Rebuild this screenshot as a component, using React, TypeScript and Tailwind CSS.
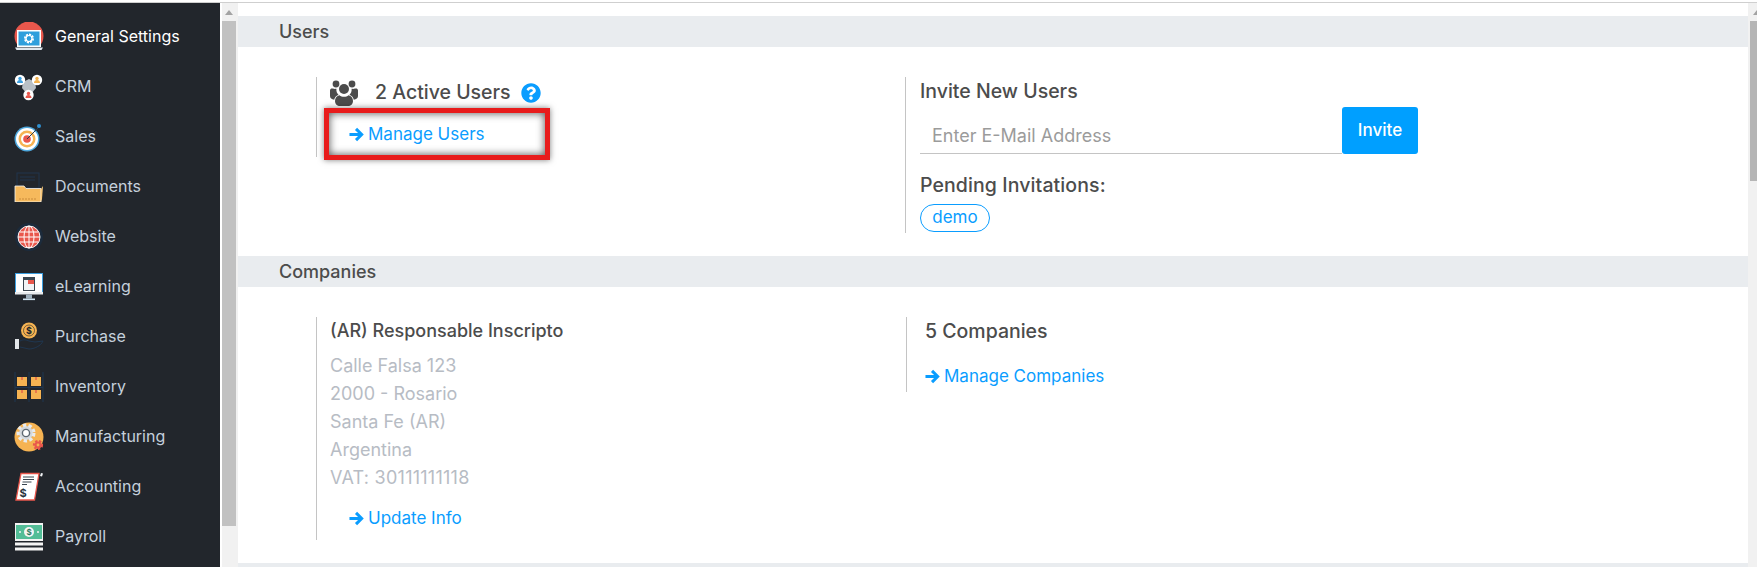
import type { ReactNode } from "react";
import { FaQuestionCircle } from "react-icons/fa";

function IconSettings() {
  return (
    <svg viewBox="0 0 30 30" className="w-[30px] h-[30px]">
      <circle cx="15" cy="14" r="14.5" fill="#e9574c" />
      <rect x="0" y="24" width="30" height="6" fill="#22262c" />
      <rect x="3" y="8" width="24" height="17" fill="#fff" />
      <rect x="4.5" y="9.5" width="21" height="14" fill="#2f9fdc" />
      <circle cx="15" cy="16.5" r="3.8" fill="none" stroke="#fff" strokeWidth="2.4" strokeDasharray="2 0.9" />
      <circle cx="15" cy="16.5" r="3" fill="none" stroke="#fff" strokeWidth="1.2" />
      <path d="M1 25.5h28l-1.5 2.5h-25z" fill="#dfe6ec" />
    </svg>
  );
}

function IconCrm() {
  const bubble = (cx: number, cy: number, c: string) => (
    <g>
      <circle cx={cx} cy={cy} r="5.2" fill="#fff" />
      <circle cx={cx} cy={cy - 1.5} r="1.7" fill={c} />
      <path d={`M${cx - 3} ${cy + 3}a3 3 0 0 1 6 0z`} fill={c} />
    </g>
  );
  return (
    <svg viewBox="0 0 30 30" className="w-[30px] h-[30px]">
      <path d="M9 10l6-3 6 3 1 6-5 6h-4l-5-6z" fill="#b9c0c6" />
      {bubble(6, 8, "#3c9fe0")}
      {bubble(23, 8, "#f2b04c")}
      {bubble(14.5, 23, "#e9574c")}
    </svg>
  );
}

function IconSales() {
  return (
    <svg viewBox="0 0 30 30" className="w-[30px] h-[30px]">
      <circle cx="13" cy="17" r="12.5" fill="#4ea7dc" />
      <circle cx="13" cy="17" r="11" fill="#fff" />
      <circle cx="13" cy="17" r="8.5" fill="#f6b352" />
      <circle cx="13" cy="17" r="6" fill="#fff" />
      <circle cx="13" cy="17" r="3.8" fill="#e9574c" />
      <path d="M13 17L24.5 5.5" stroke="#2c3e50" strokeWidth="1" />
      <circle cx="25" cy="4" r="2" fill="#2f8fd0" />
    </svg>
  );
}

function IconDocuments() {
  return (
    <svg viewBox="0 0 30 30" className="w-[30px] h-[30px]">
      <rect x="3" y="1" width="22" height="15" fill="none" stroke="#20344d" strokeWidth="1" />
      <path d="M6 5h15M6 8h15" stroke="#20344d" strokeWidth="1" />
      <path d="M1 14h9l2 2.5h15V30H1z" fill="#f6b95c" stroke="#f4f4f4" strokeWidth="0.8" />
      <path d="M27 17l2-3-1 13-1 3z" fill="#f7c678" />
      <path d="M5 27h18" stroke="#c98b3a" strokeWidth="1.2" strokeDasharray="2 1" />
    </svg>
  );
}

function IconWebsite() {
  return (
    <svg viewBox="0 0 30 30" className="w-[30px] h-[30px]">
      <circle cx="15" cy="15" r="14" fill="#1c2b3c" />
      <circle cx="15" cy="15" r="11" fill="#e9574c" stroke="#f3f3f3" strokeWidth="1" />
      <ellipse cx="15" cy="15" rx="5" ry="11" fill="none" stroke="#fff" strokeWidth="1" />
      <path d="M15 4v22M4 15h22M5.5 10h19M5.5 20h19" stroke="#fff" strokeWidth="1" />
    </svg>
  );
}

function IconLearning() {
  return (
    <svg viewBox="0 0 30 30" className="w-[30px] h-[30px]">
      <rect x="1" y="1" width="28" height="21" fill="#3c9fe0" />
      <rect x="2" y="2" width="26" height="18" fill="#fff" />
      <rect x="9" y="5" width="12" height="14" fill="#3b4650" />
      <rect x="10" y="8" width="10" height="10" fill="#f1f3f5" />
      <rect x="14" y="8" width="6" height="4" fill="#e9574c" />
      <rect x="1" y="20" width="28" height="2.5" fill="#e9ecef" />
      <rect x="12" y="22.5" width="6" height="4" fill="#9fb0bd" />
      <rect x="9" y="26.5" width="12" height="1.6" fill="#cfe3f1" />
    </svg>
  );
}

function IconPurchase() {
  return (
    <svg viewBox="0 0 30 30" className="w-[30px] h-[30px]">
      <circle cx="15" cy="8.5" r="8" fill="#f6b352" />
      <circle cx="15" cy="8.5" r="5.5" fill="none" stroke="#22262c" strokeWidth="0.6" />
      <text x="15" y="12" textAnchor="middle" fontSize="9" fontWeight="700" fill="#22262c">$</text>
      <rect x="1" y="17" width="4" height="10" fill="#e3e6e9" />
      <path d="M6 19c4-2 6-1 9 0l6 1 8-1c-2 5-9 8-14 8l-9-2" fill="none" stroke="#1f3650" strokeWidth="1" />
    </svg>
  );
}

function IconInventory() {
  return (
    <svg viewBox="0 0 30 30" className="w-[30px] h-[30px]">
      <path d="M1 0v30M15 0v30M29 0v30M1 15.5h28" stroke="#1f3650" strokeWidth="1" />
      <rect x="3" y="5" width="10" height="9" fill="#f6b352" />
      <rect x="17" y="5" width="10" height="9" fill="#f6b352" />
      <rect x="3" y="18" width="10" height="9" fill="#f6b352" />
      <rect x="17" y="18" width="10" height="9" fill="#f6b352" />
      <path d="M7 5h2v3H7zM21 5h2v3h-2zM7 18h2v3H7zM21 18h2v3h-2z" fill="#e9774c" />
    </svg>
  );
}

function IconManufacturing() {
  return (
    <svg viewBox="0 0 30 30" className="w-[30px] h-[30px]">
      <circle cx="15" cy="15" r="14.5" fill="#f6b352" />
      <circle cx="12" cy="11" r="7" fill="#c6ccd2" stroke="#e8ebee" strokeWidth="5" strokeDasharray="3 2" />
      <circle cx="12" cy="11" r="6.5" fill="#d5d9dd" />
      <circle cx="12" cy="11" r="3.6" fill="#fff" stroke="#5d6872" strokeWidth="1.4" />
      <circle cx="24" cy="23" r="3.6" fill="#e9574c" stroke="#e9574c" strokeWidth="3" strokeDasharray="2 1.5" />
      <circle cx="24" cy="23" r="1.4" fill="#f6b352" />
    </svg>
  );
}

function IconAccounting() {
  return (
    <svg viewBox="0 0 30 30" className="w-[30px] h-[30px]">
      <path d="M7 1.5h18L20.5 28H2z" fill="#fff" stroke="#e9574c" strokeWidth="1.3" />
      <path d="M9 5h11M9 7.5h11M8.5 10h9M8 12.5h5" stroke="#3b4650" strokeWidth="1" />
      <text x="9" y="25" textAnchor="middle" fontSize="11" fontWeight="700" fill="#26323c">$</text>
      <path d="M26 4l1-3 2 .5-1 3z" fill="#f1f3f5" />
    </svg>
  );
}

function IconPayroll() {
  return (
    <svg viewBox="0 0 30 30" className="w-[30px] h-[30px]">
      <rect x="1" y="1" width="28" height="18" fill="#f4f4f4" />
      <rect x="2" y="3" width="26" height="14" fill="#53bd97" />
      <circle cx="15" cy="10" r="5" fill="#f4f4f4" />
      <text x="15" y="13" textAnchor="middle" fontSize="8" fontWeight="700" fill="#2a7a60">$</text>
      <circle cx="6" cy="10" r="1" fill="#f4f4f4" />
      <circle cx="24" cy="10" r="1" fill="#f4f4f4" />
      <rect x="1" y="20.5" width="28" height="3" fill="#f4f4f4" />
      <rect x="1" y="25.5" width="28" height="3" fill="#f4f4f4" />
    </svg>
  );
}

// FA4 style group icon, the one in react-icons is wider and flatter
function UsersGlyph() {
  return (
    <svg viewBox="0 0 28 26" className="w-[28px] h-[26px] shrink-0" fill="#4c4c4c">
      <circle cx="6" cy="4" r="3.4" />
      <circle cx="22" cy="4" r="3.4" />
      <circle cx="14" cy="9" r="5" />
      <path d="M0 10.5C0 8.8 1.5 8.2 3 8.6c1 .4 2.200.4 3.400.2-.3 2.400.6 4.600 2.100 6-2.400 1-3.900 2.800-4.300 5C1.700 19.500 0 18 0 16z" />
      <path d="M28 10.500C28 8.800 26.500 8.200 25 8.600c-1 .4-2.200.4-3.400.2.3 2.400-.6 4.600-2.100 6 2.400 1 3.900 2.800 4.300 5 2.500-.3 4.200-1.800 4.200-3.800z" />
      <path d="M9.500 15.200c1.200 1 2.800 1.600 4.500 1.600s3.300-.6 4.500-1.600c2.800.6 4.500 2.800 4.500 5.800 0 3-2.200 5-5 5h-8c-2.800 0-5-2-5-5 0-3 1.700-5.200 4.500-5.800z" />
    </svg>
  );
}

function ArrowGlyph() {
  return (
    <svg viewBox="0 0 16 16" className="w-[15px] h-[15px] shrink-0" fill="none" stroke="currentColor" strokeWidth="3.2">
      <path d="M0.500 8h12.500" />
      <path d="M7.500 2l6 6-6 6" />
    </svg>
  );
}

const menu: { label: string; icon: ReactNode; active?: boolean }[] = [
  { label: "General Settings", icon: <IconSettings />, active: true },
  { label: "CRM", icon: <IconCrm /> },
  { label: "Sales", icon: <IconSales /> },
  { label: "Documents", icon: <IconDocuments /> },
  { label: "Website", icon: <IconWebsite /> },
  { label: "eLearning", icon: <IconLearning /> },
  { label: "Purchase", icon: <IconPurchase /> },
  { label: "Inventory", icon: <IconInventory /> },
  { label: "Manufacturing", icon: <IconManufacturing /> },
  { label: "Accounting", icon: <IconAccounting /> },
  { label: "Payroll", icon: <IconPayroll /> },
];

function ArrowLink({ label }: { label: string }) {
  return (
    <a className="flex items-center gap-[4px] text-[17px] leading-[24px] text-[#0a9dff]">
      <ArrowGlyph />
      {label}
    </a>
  );
}

function SectionBar({ title }: { title: string }) {
  return (
    <div className="h-[31px] shrink-0 bg-[#e9ecef] pl-[41px] pb-[1px] flex items-center text-[18px] font-medium text-[#4c4c4c]">
      {title}
    </div>
  );
}

function Scrollbar({ thumbClass }: { thumbClass: string }) {
  return (
    <div className="h-full flex flex-col bg-[#f1f1f1]">
      <div className="h-[18px] w-[14px] flex items-center justify-center">
        <div className="w-0 h-0 border-x-[4px] border-x-transparent border-b-[5px] border-b-[#a3a3a3]" />
      </div>
      <div className={thumbClass} />
    </div>
  );
}

export default function App() {
  return (
    <div className="w-[1757px] h-[567px] overflow-hidden flex flex-col bg-white font-['Inter',sans-serif]">
      <div className="h-[3px] shrink-0 border-b border-[#cfcfcf]" />
      <div className="flex-1 flex min-h-0">
        <aside className="w-[220px] shrink-0 bg-[#22262c] pt-[9px] flex flex-col">
          {menu.map((m) => (
            <div key={m.label} className="h-[50px] shrink-0 flex items-center pl-[14px]">
              <span className="w-[30px] h-[30px] shrink-0">{m.icon}</span>
              <span className={`ml-[11px] pb-[2px] text-[16px] ${m.active ? "text-white" : "text-[#c5d0dc]"}`}>{m.label}</span>
            </div>
          ))}
        </aside>
        <div className="w-[2px] shrink-0 bg-white" />
        <div className="w-[16px] shrink-0">
          <Scrollbar thumbClass="w-[14px] h-[505px] bg-[#c1c1c1]" />
        </div>
        <main className="w-[1510px] shrink-0 flex flex-col pt-[13px] text-[#4c4c4c]">
          <SectionBar title="Users" />
          <section className="flex shrink-0 pl-[78px] pt-[30px] pb-[23px]">
            <div className="w-[589px] self-start h-[80px] border-l border-[#c4c4c4] pl-[13px] pt-[3px] relative">
              <div className="flex items-center h-[26px]">
                <UsersGlyph />
                <span className="ml-[17px] text-[19.5px] font-medium">2 Active Users</span>
                <FaQuestionCircle className="ml-[10px] w-[20px] h-[20px] text-[#0a9dff]" />
              </div>
              <div className="pl-[19px] mt-[16px]">
                <ArrowLink label="Manage Users" />
              </div>
              {/* red annotation box from the screenshot */}
              <div className="absolute left-[7px] top-[31px] w-[226px] h-[52px] border-[5px] border-[#e81c1c] shadow-[0_0_6px_rgba(0,0,0,0.5),inset_0_0_8px_rgba(0,0,0,0.7)]" />
            </div>
            <div className="w-[540px] h-[156px] border-l border-[#c4c4c4] pl-[14px]">
              <div className="text-[19.5px] font-medium leading-[29px]">Invite New Users</div>
              <div className="flex mt-[1px]">
                <div className="w-[422px] h-[47px] border-b border-[#c4c4c4] pl-[12px] flex items-center pt-[10px] text-[18px] text-[#9b9b9b]">
                  Enter E-Mail Address
                </div>
                <button className="w-[76px] h-[47px] rounded-[3px] bg-[#009fff] text-white text-[17px] font-medium">Invite</button>
              </div>
              <div className="mt-[18px] text-[19.5px] font-medium leading-[27px] tracking-[0.1px]">Pending Invitations:</div>
              <div className="mt-[5px] w-[70px] h-[28px] rounded-full border border-[#0a9dff] text-[#0a9dff] text-[17px] flex items-center justify-center">demo</div>
            </div>
          </section>
          <SectionBar title="Companies" />
          <section className="flex shrink-0 pl-[78px] pt-[30px] pb-[23px]">
            <div className="w-[590px] h-[223px] border-l border-[#c4c4c4] pl-[13px]">
              <div className="text-[18px] font-medium leading-[28px]">(AR) Responsable Inscripto</div>
              <div className="mt-[7px] text-[18px] leading-[28px] text-[#b7bcc4]">
                <div>Calle Falsa 123</div>
                <div>2000 - Rosario</div>
                <div>Santa Fe (AR)</div>
                <div>Argentina</div>
                <div className="tracking-[0.25px]">VAT: 30111111118</div>
              </div>
              <div className="pl-[19px] mt-[14px]">
                <ArrowLink label="Update Info" />
              </div>
            </div>
            <div className="self-start h-[75px] border-l border-[#c4c4c4] pl-[18px]">
              <div className="text-[19.5px] font-medium leading-[29px]">5 Companies</div>
              <div className="mt-[18px]">
                <ArrowLink label="Manage Companies" />
              </div>
            </div>
          </section>
          <div className="h-[31px] shrink-0 bg-[#e9ecef]" />
        </main>
        <div className="w-[16px] shrink-0 pl-[2px] bg-[#f1f1f1]">
          <Scrollbar thumbClass="w-[14px] h-[160px] bg-[#b5b5b5]" />
        </div>
      </div>
    </div>
  );
}
